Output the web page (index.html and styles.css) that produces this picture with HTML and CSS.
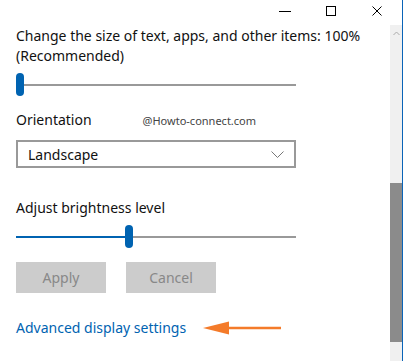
FILE: index.html
```html
<!DOCTYPE html>
<html lang="en">

<head>
    <meta charset="UTF-8">
    <meta name="viewport" content="width=device-width, initial-scale=1.0">
    <title>Display settings</title>
    <link rel="stylesheet" href="styles.css">
</head>

<body>
    <div class="window">
        <div class="titlebar">
            <span class="tb-btn">
                <svg width="12" height="12" viewBox="0 0 12 12"><path d="M0 6.5h12" stroke="#000" stroke-width="1" /></svg>
            </span>
            <span class="tb-btn">
                <svg width="12" height="12" viewBox="0 0 12 12"><rect x="1.5" y="1.5" width="9" height="9" fill="none" stroke="#000" stroke-width="1" /></svg>
            </span>
            <span class="tb-btn">
                <svg width="12" height="12" viewBox="0 0 12 12"><path d="M1.5 1.5l9 9M10.5 1.5l-9 9" stroke="#000" stroke-width="1" /></svg>
            </span>
        </div>

        <div class="body">
            <div class="content">
                <p class="label scale-label">Change the size of text, apps, and other items: 100% (Recommended)</p>

                <div class="slider slider-scale">
                    <div class="thumb"></div>
                    <div class="track"></div>
                </div>

                <div class="orient-row">
                    <span class="label">Orientation</span>
                    <span class="watermark">@Howto-connect.com</span>
                </div>

                <div class="dropdown">
                    <span>Landscape</span>
                    <svg width="13" height="7" viewBox="0 0 13 7"><path d="M0.5 0.5l6 6 6-6" fill="none" stroke="#777" stroke-width="1" /></svg>
                </div>

                <p class="label bright-label">Adjust brightness level</p>

                <div class="slider slider-bright">
                    <div class="track-fill"></div>
                    <div class="thumb"></div>
                    <div class="track"></div>
                </div>

                <div class="buttons">
                    <button class="btn" disabled>Apply</button>
                    <button class="btn" disabled>Cancel</button>
                </div>

                <div class="link-row">
                    <a class="link" href="#">Advanced display settings</a>
                    <svg class="arrow" width="80" height="14" viewBox="0 0 80 14">
                        <path d="M25 5.8h53v2.4h-53z" fill="#f47b2a" />
                        <path d="M0 7L26 0.5v13z" fill="#f47b2a" />
                    </svg>
                </div>
            </div>

            <div class="scrollbar">
                <div class="sb-arrow">
                    <svg width="7" height="5" viewBox="0 0 7 5"><path d="M0.5 4l3-3 3 3" fill="none" stroke="#aaa" stroke-width="1" /></svg>
                </div>
                <div class="sb-space"></div>
                <div class="sb-thumb"></div>
                <div class="sb-arrow"></div>
            </div>
        </div>
    </div>
</body>

</html>
```

FILE: styles.css
```css
body {
    margin: 0;
    font-family: "Noto Sans", "Open Sans", sans-serif;
    background: #fff;
    color: #111;
}

.window {
    width: 402px;
    height: 361px;
    border-right: 1px solid #0a64b8;
    display: flex;
    flex-direction: column;
    overflow: hidden;
}

.titlebar {
    height: 25px;
    display: flex;
    justify-content: flex-end;
    align-items: flex-start;
    padding-right: 19px;
    gap: 34px;
}

.tb-btn {
    padding-top: 5px;
    line-height: 0;
}

.body {
    flex: 1;
    display: flex;
    min-height: 0;
}

.content {
    flex: 1;
    padding-left: 16px;
    padding-right: 94px;
}

.label {
    margin: 0;
    font-size: 14px;
    line-height: 20px;
}

.scale-label {
    margin-top: 1px;
    margin-right: -70px;
}

/* sliders */
.slider {
    position: relative;
    height: 23px;
    display: flex;
    align-items: center;
}

.slider-scale {
    margin-top: 7px;
}

.slider .track {
    flex: 1;
    height: 2px;
    background: #999;
}

.slider .track-fill {
    width: 109px;
    height: 2px;
    background: #0063b1;
}

.slider .thumb {
    width: 8px;
    height: 23px;
    border-radius: 4px;
    background: #0063b1;
}

.orient-row {
    margin-top: 14px;
    display: flex;
    align-items: center;
}

.watermark {
    margin-left: 51px;
    font-size: 11px;
    color: #444;
}

.dropdown {
    margin-top: 10px;
    height: 24px;
    border: 2px solid #999;
    display: flex;
    align-items: center;
    justify-content: space-between;
    padding: 0 10px;
    font-size: 14px;
}

.bright-label {
    margin-top: 30px;
}

.slider-bright {
    margin-top: 7px;
}

.buttons {
    margin-top: 14px;
    display: flex;
    gap: 20px;
}

.btn {
    width: 90px;
    height: 31px;
    border: 0;
    background: #ccc;
    color: #888;
    font-family: inherit;
    font-size: 14px;
    padding: 0;
}

.link-row {
    margin-top: 25px;
    display: flex;
    align-items: center;
}

.link {
    color: #0063b1;
    font-size: 14px;
    line-height: 20px;
    text-decoration: none;
}

.arrow {
    margin-left: 17px;
}

/* scrollbar */
.scrollbar {
    width: 12px;
    background: #f0f0f0;
    display: flex;
    flex-direction: column;
}

.sb-arrow {
    height: 17px;
    display: flex;
    justify-content: center;
    align-items: center;
}

.sb-space {
    height: 141px;
}

.sb-thumb {
    height: 159px;
    background: #8b8b8b;
}
```
